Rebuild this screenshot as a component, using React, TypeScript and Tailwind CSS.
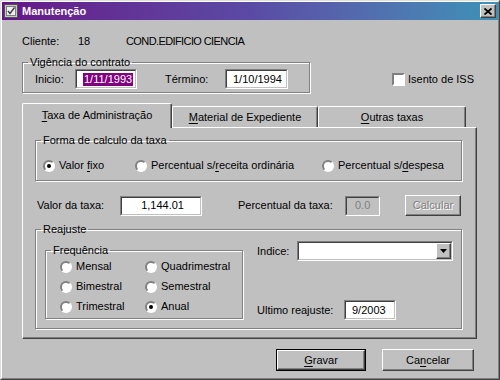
import { ReactNode } from 'react'

const raised =
  'border border-t-white border-l-white border-r-[#404040] border-b-[#404040] shadow-[inset_-1px_-1px_0_#808080]'
const etched = 'border border-[#808080] shadow-[1px_1px_0_white,inset_1px_1px_0_white]'

function U({ children }: { children: ReactNode }) {
  return <span className="underline underline-offset-[2px]">{children}</span>
}

function Field({ className, children }: { className: string; children?: ReactNode }) {
  return (
    <div
      className={`h-[20px] border border-t-[#808080] border-l-[#808080] border-r-white border-b-white ${className}`}
    >
      <div className="h-full w-full border border-t-[#404040] border-l-[#404040] border-r-[#c0c0c0] border-b-[#c0c0c0] flex items-center">
        {children}
      </div>
    </div>
  )
}

function Radio({ checked, children, className }: { checked?: boolean; children: ReactNode; className: string }) {
  return (
    <div className={`flex items-center h-[13px] ${className}`}>
      <div className="w-[12px] h-[12px] rounded-full bg-white border-2 border-t-[#808080] border-l-[#808080] border-r-white border-b-white flex items-center justify-center shrink-0">
        {checked && <div className="w-[4px] h-[4px] rounded-full bg-black" />}
      </div>
      <span className="ml-[4px] whitespace-nowrap">{children}</span>
    </div>
  )
}

function Group({ label, className, children }: { label: string; className: string; children: ReactNode }) {
  return (
    <fieldset className={`${etched} ${className}`}>
      <legend className="ml-[5px] px-[2px] leading-[13px]">{label}</legend>
      {children}
    </fieldset>
  )
}

function Tab({ active, className, children }: { active?: boolean; className: string; children: ReactNode }) {
  return (
    <div
      className={`flex items-center justify-center rounded-t-[2px] border-t border-l border-t-white border-l-white border-r border-r-[#404040] shadow-[inset_-1px_0_0_#808080] bg-[#c0c0c0] ${
        active ? 'h-[25px] -mb-[1px] relative z-10 pb-[2px]' : 'h-[21px]'
      } ${className}`}
    >
      {children}
    </div>
  )
}

export default function App() {
  return (
    <div className="w-[500px] h-[380px] bg-[#c0c0c0] border border-t-[#dfdfdf] border-l-[#dfdfdf] border-r-[#404040] border-b-[#404040] text-[11px] leading-[13px] text-black font-['Liberation_Sans',Arial,sans-serif] overflow-hidden">
      <div className="h-full border border-t-white border-l-white border-r-[#808080] border-b-[#808080]">
        {/* title bar */}
        <div className="h-[18px] flex items-center bg-linear-to-r from-[#661488] via-[#5a4aa5] to-[#3a92b8] pl-[2px] pr-[2px]">
          <svg width="14" height="14" viewBox="0 0 14 14" className="shrink-0">
            <rect x="0.5" y="0.5" width="13" height="13" fill="#c8c8c8" stroke="#505050" />
            <rect x="2.5" y="2.5" width="9" height="9" fill="#f0f0f0" stroke="#808080" />
            <path d="M4 7 L6 9.5 L10.5 3.5" stroke="#404040" strokeWidth="1.4" fill="none" />
          </svg>
          <span className="ml-[4px] text-white font-bold">Manutenção</span>
          <div className={`ml-auto w-[16px] h-[14px] bg-[#c0c0c0] ${raised} flex items-center justify-center`}>
            <svg width="8" height="7" viewBox="0 0 8 7">
              <path d="M0.5 0.5 L7.5 6.5 M7.5 0.5 L0.5 6.5" stroke="black" strokeWidth="1.8" />
            </svg>
          </div>
        </div>

        <div className="pl-[20px]">
          {/* cliente */}
          <div className="mt-[15px] h-[13px] flex items-center">
            <span className="w-[56px]">Cliente:</span>
            <span className="w-[48px]">18</span>
            <span className="tracking-[-0.6px]">COND.EDIFICIO CIENCIA</span>
          </div>

          {/* vigencia */}
          <div className="mt-[8px] flex items-start">
            <Group label="Vigência do contrato" className="w-[288px] h-[37px]">
              <div className="mt-[0px] flex items-center pl-[12px]">
                <span className="w-[40px]">Inicio:</span>
                <Field className="w-[62px] bg-white">
                  <span className="ml-[6px] bg-[#800080] text-white px-[1px]">1/11/1993</span>
                </Field>
                <span className="ml-[28px] w-[60px]">Término:</span>
                <Field className="w-[63px] bg-white">
                  <span className="ml-[6px]">1/10/1994</span>
                </Field>
              </div>
            </Group>
            <div className="ml-[82px] mt-[17px] flex items-center">
              <div className="w-[13px] h-[13px] bg-white border-2 border-t-[#808080] border-l-[#808080] border-r-white border-b-white" />
              <span className="ml-[3px]">Isento de ISS</span>
            </div>
          </div>

          {/* tabs */}
          <div className="mt-[10px] h-[24px] flex items-end">
            <Tab active className="w-[150px]">
              <span>
                <U>T</U>axa de Administração
              </span>
            </Tab>
            <Tab className="w-[146px]">
              <span>
                <U>M</U>aterial de Expediente
              </span>
            </Tab>
            <Tab className="w-[148px]">
              <span>
                <U>O</U>utras taxas
              </span>
            </Tab>
          </div>

          {/* panel */}
          <div className="w-[455px] h-[212px] border border-t-white border-l-white border-r-[#404040] border-b-[#404040] shadow-[inset_-1px_-1px_0_#808080] pl-[12px]">
            <Group label="Forma de calculo da taxa" className="mt-[6px] w-[427px] h-[47px]">
              <div className="mt-[12px] flex items-center pl-[7px]">
                <Radio checked className="w-[92px]">
                  Valor <U>f</U>ixo
                </Radio>
                <Radio className="w-[187px]">
                  Percentual s/<U>r</U>eceita ordinária
                </Radio>
                <Radio className="">
                  Percentual s/<U>d</U>espesa
                </Radio>
              </div>
            </Group>

            <div className="mt-[14px] flex items-center pl-[2px]">
              <span className="w-[83px]">Valor da taxa:</span>
              <Field className="w-[82px] bg-white">
                <span className="ml-auto mr-[16px]">1,144.01</span>
              </Field>
              <span className="ml-[36px] w-[107px]">Percentual da taxa:</span>
              <Field className="w-[35px] bg-[#c0c0c0]">
                <span className="ml-[8px] text-[#808080]">0.0</span>
              </Field>
              <div className={`ml-[25px] w-[56px] h-[21px] ${raised} flex items-center justify-center`}>
                <span className="text-[#808080] [text-shadow:1px_1px_0_white]">Calcular</span>
              </div>
            </div>

            <Group label="Reajuste" className="mt-[7px] w-[427px] h-[106px]">
              <div className="flex items-start">
                <Group label="Frequência" className="ml-[9px] mt-[8px] w-[198px] h-[75px]">
                  <div className="mt-[3px] pl-[14px] grid grid-cols-[85px_85px] gap-y-[7px]">
                    <Radio className="">Mensal</Radio>
                    <Radio className="">Quadrimestral</Radio>
                    <Radio className="">Bimestral</Radio>
                    <Radio className="">Semestral</Radio>
                    <Radio className="">Trimestral</Radio>
                    <Radio checked className="">
                      Anual
                    </Radio>
                  </div>
                </Group>
                <div className="ml-[14px] mt-[5px] flex flex-col">
                  <div className="flex items-center">
                    <span className="w-[40px]">Indice:</span>
                    <Field className="w-[156px] bg-white">
                      <div className={`ml-auto h-[16px] w-[15px] bg-[#c0c0c0] ${raised} flex items-center justify-center`}>
                        <svg width="7" height="4" viewBox="0 0 7 4">
                          <path d="M0 0 H7 L3.5 4 Z" fill="black" />
                        </svg>
                      </div>
                    </Field>
                  </div>
                  <div className="mt-[39px] flex items-center">
                    <span className="w-[87px]">Ultimo reajuste:</span>
                    <Field className="w-[52px] bg-white">
                      <span className="ml-[6px]">9/2003</span>
                    </Field>
                  </div>
                </div>
              </div>
            </Group>
          </div>

          {/* buttons */}
          <div className="mt-[10px] flex items-center pl-[254px]">
            <div className="w-[90px] h-[22px] border border-black">
              <div className={`h-full ${raised} flex items-center justify-center`}>
                <span>
                  <U>G</U>ravar
                </span>
              </div>
            </div>
            <div className={`ml-[16px] w-[92px] h-[22px] ${raised} flex items-center justify-center`}>
              <span>
                Ca<U>n</U>celar
              </span>
            </div>
          </div>
        </div>
      </div>
    </div>
  )
}
